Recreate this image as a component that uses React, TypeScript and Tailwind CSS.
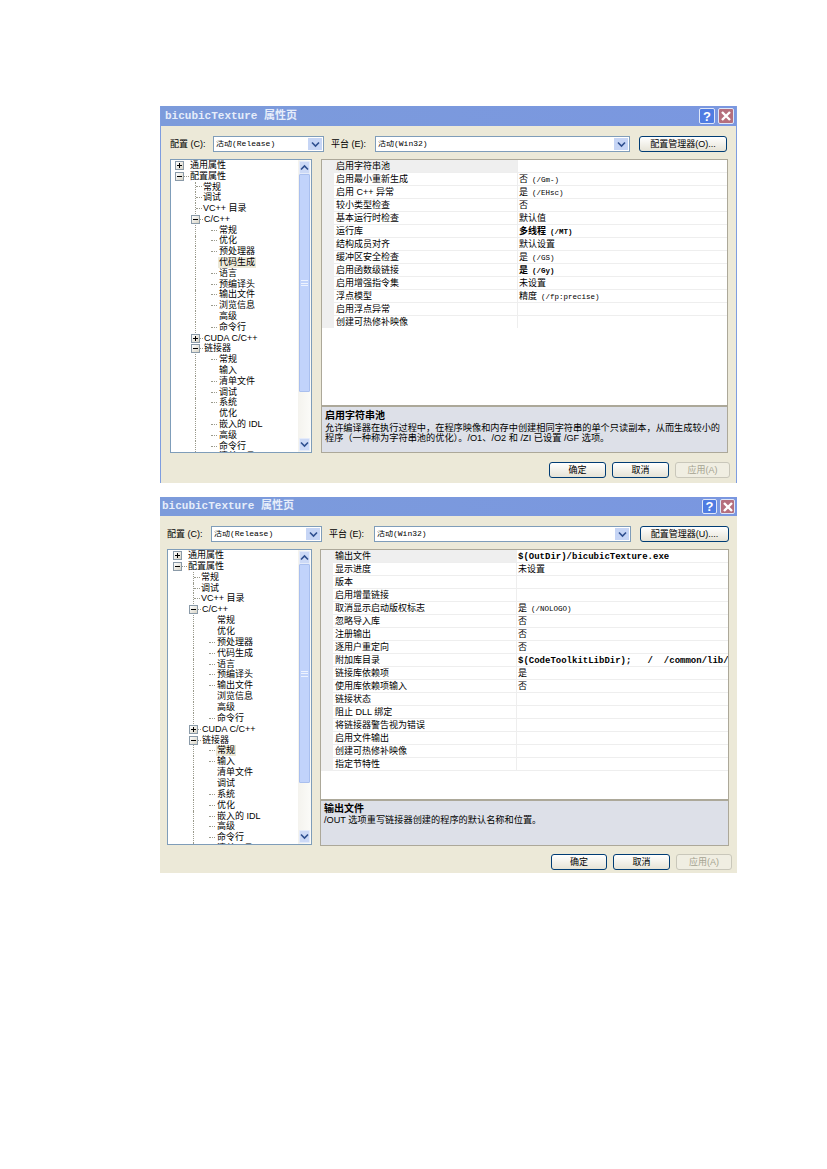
import React from "react";

const sans = "font-['Liberation_Sans','Noto_Sans_CJK_SC',sans-serif]";
const mono = "font-['Liberation_Mono','Noto_Sans_CJK_SC',monospace]";

type TreeRow = { t: string; k: "r" | "e" | "l" | "s"; open?: boolean; line?: boolean; nd?: boolean; sel?: boolean };

function makeTree(labels: string[], noDash: number[], sel: number): TreeRow[] {
  const kinds: ("r" | "e" | "l" | "s")[] = ["r","r","l","l","l","e","s","s","s","s","s","s","s","s","s","s","e","e","s","s","s","s","s","s","s","s","s","s"];
  return labels.map((t, i) => ({
    t,
    k: kinds[i],
    open: i === 1 || i === 5 || i === 17,
    nd: noDash.includes(i),
    sel: i === sel,
  }));
}

function Expander({ open }: { open?: boolean }) {
  return (
    <div className="w-[9px] h-[9px] shrink-0 border border-[#8a9aa8] bg-gradient-to-br from-white to-[#d8d4c6] flex items-center justify-center relative">
      <div className="w-[5px] h-[1px] bg-black" />
      {!open && <div className="absolute w-[1px] h-[5px] bg-black" />}
    </div>
  );
}

function Line() {
  return <div className="w-[25px] self-stretch shrink-0 border-r border-dotted border-[#9a9a8c]" />;
}

function Row({ r, rowH }: { r: TreeRow; rowH: string }) {
  const label = (
    <span className={`px-[1px] leading-[11px] whitespace-nowrap ${r.sel ? "bg-[#ece9d8]" : ""}`}>{r.t}</span>
  );
  return (
    <div className={`flex items-center shrink-0 ${rowH}`}>
      {r.k === "r" && (
        <>
          <div className="w-[4px] shrink-0" />
          <Expander open={r.open} />
          {r.open ? <div className="w-[5px] h-0 border-t border-dotted border-[#9a9a8c] shrink-0" /> : <div className="w-[5px] shrink-0" />}
          {label}
        </>
      )}
      {r.k === "e" && (
        <>
          <div className="w-[20px] shrink-0" />
          <Expander open={r.open} />
          <div className="w-[3px] h-0 border-t border-dotted border-[#9a9a8c] shrink-0" />
          {label}
        </>
      )}
      {r.k === "l" && (
        <>
          <Line />
          <div className="w-[6px] h-0 border-t border-dotted border-[#9a9a8c] shrink-0" />
          {label}
        </>
      )}
      {r.k === "s" && (
        <>
          <Line />
          <div className="w-[15px] shrink-0" />
          <div className={`w-[6px] h-0 border-t border-dotted shrink-0 ${r.nd ? "border-transparent" : "border-[#9a9a8c]"}`} />
          <div className="w-[1px] shrink-0" />
          {label}
        </>
      )}
    </div>
  );
}

function Chevron({ dir }: { dir: "up" | "down" }) {
  return (
    <svg width="9" height="7" viewBox="0 0 9 7" fill="none" stroke="#2f4f8f" strokeWidth="1.6">
      <path d={dir === "down" ? "M1 1.5 L4.5 5 L8 1.5" : "M1 5.5 L4.5 2 L8 5.5"} />
    </svg>
  );
}

function ScrollBar({ thumb }: { thumb: string }) {
  return (
    <div className="w-[13px] shrink-0 flex flex-col bg-gradient-to-r from-[#f4f3ee] to-[#fbfbf8] p-[0px]">
      <div className="h-[13px] shrink-0 mx-[1px] mt-[1px] bg-[#ccd9f6] border border-[#e4ebfa] rounded-[1px] flex items-center justify-center">
        <Chevron dir="up" />
      </div>
      <div className={`${thumb} shrink-0 mx-[1px] bg-[#c1d3fb] border border-[#a9bfee] rounded-[1px] flex items-center justify-center`}>
        <div className="w-[7px] h-[6px] border-y border-[#eef3fe] flex items-center">
          <div className="w-full h-[1px] bg-[#eef3fe]" />
        </div>
      </div>
      <div className="flex-1" />
      <div className="h-[13px] shrink-0 mx-[1px] mb-[1px] bg-[#ccd9f6] border border-[#e4ebfa] rounded-[1px] flex items-center justify-center">
        <Chevron dir="down" />
      </div>
    </div>
  );
}

function Combo({ width, text, h }: { width: string; text: string; h: string }) {
  return (
    <div className={`${width} ${h} shrink-0 border border-[#7f9db9] bg-white flex items-center`}>
      <span className={`flex-1 pl-[2px] text-[8px] leading-none whitespace-nowrap overflow-hidden ${mono}`}>{text}</span>
      <div className="w-[14px] self-stretch m-[1px] bg-[#c6d5f5] flex items-center justify-center">
        <Chevron dir="down" />
      </div>
    </div>
  );
}

function Btn({ width, text, off }: { width: string; text: string; off?: boolean }) {
  return (
    <div
      className={`${width} h-[16px] shrink-0 rounded-[3px] border flex items-center justify-center text-[9px] leading-none ${
        off
          ? "border-[#c9c7ba] bg-[#f0eee2] text-[#a5a391]"
          : "border-[#003c74] bg-gradient-to-b from-white to-[#e6e3d6] text-black"
      }`}
    >
      {text}
    </div>
  );
}

type Prop = { n: string; v?: string; l?: string; b?: boolean };

function Grid({ rows }: { rows: Prop[] }) {
  return (
    <div className="flex-1 min-h-0 bg-white overflow-hidden">
      {rows.map((r, i) => (
        <div key={i} className="flex h-[13px]">
          <div className="w-[12px] shrink-0 bg-[#efefef]" />
          <div className={`w-[183px] shrink-0 border-b border-[#eeeeee] pl-[2px] text-[9px] leading-[12px] whitespace-nowrap overflow-hidden ${i === 0 ? "bg-[#efefef]" : ""}`}>
            {r.n}
          </div>
          <div className="w-[1px] shrink-0 bg-[#eeeeee]" />
          <div className={`flex-1 min-w-0 border-b border-[#eeeeee] pl-[1px] text-[9px] leading-[12px] whitespace-pre overflow-hidden ${r.b ? "font-bold" : ""}`}>
            {r.v}
            {r.l && <span className={`${mono} ${r.v ? "text-[7.5px] ml-[4px]" : "text-[9px]"}`}>{r.l}</span>}
          </div>
        </div>
      ))}
    </div>
  );
}

function TitleBtns({ size }: { size: string }) {
  return (
    <div className="flex items-center gap-[3px]">
      <div className={`${size} bg-[#4f7ce2] border border-[#dfe7f8] rounded-[2px] flex items-center justify-center text-white font-bold text-[13px] leading-none ${sans}`}>?</div>
      <div className={`${size} bg-[#b56f7d] border border-[#dfe7f8] rounded-[2px] flex items-center justify-center`}>
        <svg width="10" height="10" viewBox="0 0 10 10" stroke="white" strokeWidth="2.4" fill="none">
          <path d="M1 1 L9 9 M9 1 L1 9" />
        </svg>
      </div>
    </div>
  );
}

type Spec = {
  shell: string; titleCls: string; btnSize: string; comboRow: string; comboH: string;
  lab1: string; combo1: string; c1: string; lab2: string; combo2: string; c2: string; mgrCls: string; mgr: string;
  mainRow: string; tree: string; treePad: string; rowH: string; thumb: string; grid: string; gridGap: string;
  descCls: string; descHead: string; descTitle: string; desc: string[]; btnRow: string; bw: string[]; apply: string; labA: string; labB: string;
  rows: Prop[]; treeRows: TreeRow[];
};

function Dialog({ s }: { s: Spec }) {
  return (
    <div className={`${s.shell} bg-[#ece9d8] flex flex-col text-black ${sans}`}>
      <div className={`${s.titleCls} shrink-0 flex items-center justify-between bg-gradient-to-r from-[#7c9bdb] to-[#7a97e0]`}>
        <span className={`text-[#e6edfa] text-[11px] font-bold leading-none whitespace-nowrap ${mono}`}>bicubicTexture 属性页</span>
        <TitleBtns size={s.btnSize} />
      </div>
      <div className={s.comboRow}>
        <div className={`${s.lab1} text-[9px] leading-none shrink-0`}>{s.labA}</div>
        <Combo width={s.combo1} text={s.c1} h={s.comboH} />
        <div className={`${s.lab2} text-[9px] leading-none shrink-0`}>{s.labB}</div>
        <Combo width={s.combo2} text={s.c2} h={s.comboH} />
        <div className={`${s.mgrCls} h-[16px] shrink-0 rounded-[3px] border border-[#003c74] bg-gradient-to-b from-white to-[#e6e3d6] flex items-center justify-center text-[9px] leading-none`}>
          {s.mgr}
        </div>
      </div>
      <div className={s.mainRow}>
        <div className={`${s.tree} shrink-0 border border-[#7f9db9] bg-white flex overflow-hidden`}>
          <div className={`flex-1 min-w-0 flex flex-col overflow-hidden text-[9px] ${s.treePad}`}>
            {s.treeRows.map((r, i) => (
              <Row key={i} r={r} rowH={s.rowH} />
            ))}
          </div>
          <ScrollBar thumb={s.thumb} />
        </div>
        <div className={`${s.grid} shrink-0 border border-[#aca899] border-b-[#aca899] flex flex-col bg-[#dde0e8]`}>
          <Grid rows={s.rows} />
          <div className={`${s.gridGap} shrink-0 bg-white`} />
          <div className={`${s.descCls} shrink-0 border-t-2 border-[#aca899] px-[3px] pt-[1px] bg-[#dde0e8]`}>
            <div className={`font-bold text-[10px] ${s.descHead}`}>{s.descTitle}</div>
            {s.desc.map((d, i) => (
              <div key={i} className="text-[9.2px] leading-[10px] whitespace-nowrap">{d}</div>
            ))}
          </div>
        </div>
      </div>
      <div className={s.btnRow}>
        <Btn width={s.bw[0]} text="确定" />
        <Btn width={s.bw[1]} text="取消" />
        <Btn width={s.bw[2]} text={s.apply} off />
      </div>
    </div>
  );
}

const treeLabels = ["通用属性","配置属性","常规","调试","VC++ 目录","C/C++","常规","优化","预处理器","代码生成","语言","预编译头","输出文件","浏览信息","高级","命令行","CUDA C/C++","链接器","常规","输入","清单文件","调试","系统","优化","嵌入的 IDL","高级","命令行","清单工具"];
const tree1 = makeTree(treeLabels, [9, 14, 19, 23], 9);
const tree2 = makeTree(treeLabels, [6, 7, 13, 14, 20, 21], 18);

const rows1: Prop[] = [
  { n: "启用字符串池" },
  { n: "启用最小重新生成", v: "否", l: "(/Gm-)" },
  { n: "启用 C++ 异常", v: "是", l: "(/EHsc)" },
  { n: "较小类型检查", v: "否" },
  { n: "基本运行时检查", v: "默认值" },
  { n: "运行库", v: "多线程", l: "(/MT)", b: true },
  { n: "结构成员对齐", v: "默认设置" },
  { n: "缓冲区安全检查", v: "是", l: "(/GS)" },
  { n: "启用函数级链接", v: "是", l: "(/Gy)", b: true },
  { n: "启用增强指令集", v: "未设置" },
  { n: "浮点模型", v: "精度", l: "(/fp:precise)" },
  { n: "启用浮点异常" },
  { n: "创建可热修补映像" },
];

const rows2: Prop[] = [
  { n: "输出文件", l: "$(OutDir)/bicubicTexture.exe", b: true },
  { n: "显示进度", v: "未设置" },
  { n: "版本" },
  { n: "启用增量链接" },
  { n: "取消显示启动版权标志", v: "是", l: "(/NOLOGO)" },
  { n: "忽略导入库", v: "否" },
  { n: "注册输出", v: "否" },
  { n: "逐用户重定向", v: "否" },
  { n: "附加库目录", l: "$(CodeToolkitLibDir);   /  /common/lib/$", b: true },
  { n: "链接库依赖项", v: "是" },
  { n: "使用库依赖项输入", v: "否" },
  { n: "链接状态" },
  { n: "阻止 DLL 绑定" },
  { n: "将链接器警告视为错误" },
  { n: "启用文件输出" },
  { n: "创建可热修补映像" },
  { n: "指定节特性" },
];

const d1: Spec = {
  shell: "w-[577px] h-[377px] border-x border-[#7e9de0]",
  titleCls: "h-[20px] pl-[4px] pr-[2px]",
  btnSize: "w-[16px] h-[16px]",
  comboRow: "flex items-center pl-[9px] pt-[10px]",
  comboH: "h-[16px]",
  lab1: "w-[43px]",
  combo1: "w-[111px]",
  c1: "活动(Release)",
  lab2: "w-[44px] ml-[7px]",
  combo2: "w-[255px]",
  c2: "活动(Win32)",
  mgrCls: "w-[88px] ml-[9px]",
  mgr: "配置管理器(O)...",
  mainRow: "flex gap-[9px] pl-[9px] mt-[7px]",
  tree: "w-[142px] h-[294px]",
  treePad: "pt-[0px]",
  rowH: "h-[10.8px]",
  thumb: "h-[218px]",
  grid: "w-[407px] h-[294px]",
  gridGap: "h-[77px]",
  descCls: "h-[47px]",
  descHead: "leading-[15px]",
  descTitle: "启用字符串池",
  desc: [
    "允许编译器在执行过程中，在程序映像和内存中创建相同字符串的单个只读副本，从而生成较小的",
    "程序（一种称为字符串池的优化）。/O1、/O2 和 /ZI 已设置 /GF 选项。",
  ],
  btnRow: "flex justify-end gap-[6px] pr-[6px] mt-[9px]",
  bw: ["w-[57px]", "w-[57px]", "w-[55px]"],
  apply: "应用(A)",
  labA: "配置 (C):",
  labB: "平台 (E):",
  rows: rows1,
  treeRows: tree1,
};

const d2: Spec = {
  shell: "w-[577px] h-[376px]",
  titleCls: "h-[19px] pl-[2px] pr-[2px]",
  btnSize: "w-[15px] h-[15px]",
  comboRow: "flex items-center pl-[7px] pt-[10px]",
  comboH: "h-[16px]",
  lab1: "w-[44px]",
  combo1: "w-[111px]",
  c1: "活动(Release)",
  lab2: "w-[45px] ml-[7px]",
  combo2: "w-[257px]",
  c2: "活动(Win32)",
  mgrCls: "w-[89px] ml-[9px]",
  mgr: "配置管理器(U)....",
  mainRow: "flex gap-[8px] pl-[7px] mt-[7px]",
  tree: "w-[145px] h-[296px]",
  treePad: "pl-[1px]",
  rowH: "h-[10.87px]",
  thumb: "h-[219px]",
  grid: "w-[409px] h-[297px]",
  gridGap: "h-[27px]",
  descCls: "h-[46px]",
  descHead: "leading-[13px]",
  descTitle: "输出文件",
  desc: ["/OUT 选项重写链接器创建的程序的默认名称和位置。"],
  btnRow: "flex justify-end gap-[6px] pr-[5px] mt-[8px]",
  bw: ["w-[56px]", "w-[57px]", "w-[56px]"],
  apply: "应用(A)",
  labA: "配置 (C):",
  labB: "平台 (E):",
  rows: rows2,
  treeRows: tree2,
};

export default function App() {
  return (
    <div className="min-h-[1169px] w-[827px] bg-white pt-[106px] pl-[160px]">
      <div className="flex flex-col gap-[14px] w-[577px]">
        <Dialog s={d1} />
        <Dialog s={d2} />
      </div>
    </div>
  );
}
